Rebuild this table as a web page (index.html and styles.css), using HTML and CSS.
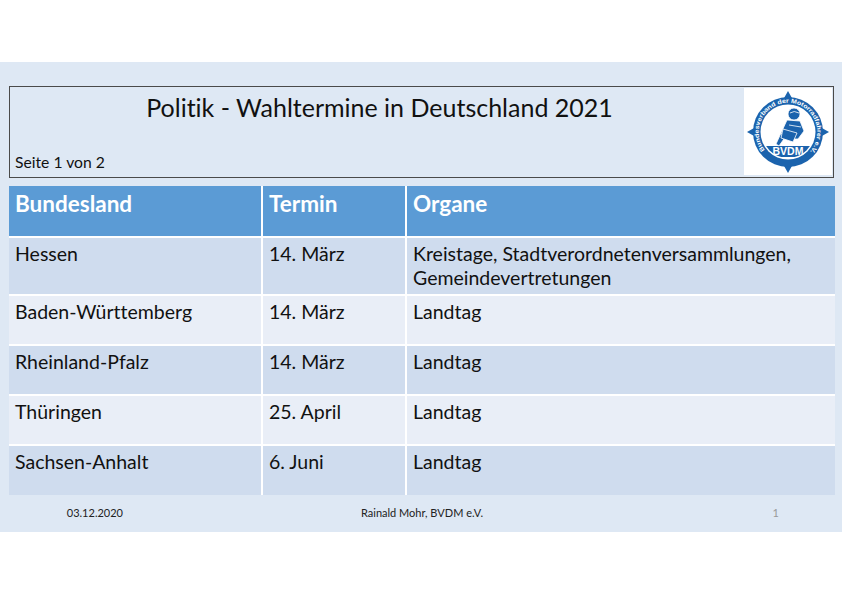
FILE: index.html
```html
<!DOCTYPE html>
<html lang="de">
<head>
<meta charset="utf-8">
<title>Politik - Wahltermine in Deutschland 2021</title>
<link rel="stylesheet" href="styles.css">
</head>
<body>
<div class="slide">
  <header class="head">
    <div class="head-text">
      <h1 class="title">Politik - Wahltermine in Deutschland 2021</h1>
      <div class="page">Seite 1 von 2</div>
    </div>
    <div class="logo">
      <svg width="86" height="86" viewBox="0 0 86 86">
        <defs>
          <path id="ring" d="M 20.5 61.9 A 29.3 29.3 0 1 1 65.5 61.9" />
          <clipPath id="disc"><circle cx="43" cy="43" r="26"/></clipPath>
        </defs>
        <polygon points="43,2 47.5,10 38.5,10" fill="#1b63ad"/>
        <polygon points="43,84 47.5,76 38.5,76" fill="#1b63ad"/>
        <polygon points="2,43 10,38.5 10,47.5" fill="#1b63ad"/>
        <polygon points="84,43 76,38.5 76,47.5" fill="#1b63ad"/>
        <circle cx="43" cy="43" r="35" fill="#1b63ad"/>
        <circle cx="43" cy="43" r="27.5" fill="#ffffff"/>
        <text class="ring-text"><textPath href="#ring" startOffset="1" textLength="132" lengthAdjust="spacingAndGlyphs">Bundesverband der Motorradfahrer e.V.</textPath></text>
        <g clip-path="url(#disc)">
          <rect x="10" y="57" width="66" height="11" fill="#1b63ad"/>
        </g>
        <g fill="#1b63ad" stroke="#ffffff" stroke-width="0.8" stroke-linejoin="round">
          <path d="M 36 44 L 31 55 L 34 57 L 41 47 Z"/>
          <path d="M 42 31 L 55 32 L 59 42 L 53 50 L 41 50 L 36 44 Z"/>
          <circle cx="49" cy="25" r="6"/>
          <path d="M 45 24 Q 49 21 54 24" fill="none"/>
          <path d="M 38 40 L 52 44 L 48 53 L 36 49 Z"/>
          <path d="M 44 36 L 56 38" fill="none"/>
        </g>
        <text x="43" y="66.3" class="bvdm">BVDM</text>
      </svg>
    </div>
  </header>

  <table class="grid">
    <thead>
      <tr class="hrow">
        <th class="c1">Bundesland</th>
        <th class="c2">Termin</th>
        <th class="c3">Organe</th>
      </tr>
    </thead>
    <tbody>
      <tr class="dark tall"><td>Hessen</td><td>14. März</td><td>Kreistage, Stadtverordnetenversammlungen,<br>Gemeindevertretungen</td></tr>
      <tr class="light"><td>Baden-Württemberg</td><td>14. März</td><td>Landtag</td></tr>
      <tr class="dark"><td>Rheinland-Pfalz</td><td>14. März</td><td>Landtag</td></tr>
      <tr class="light"><td>Thüringen</td><td>25. April</td><td>Landtag</td></tr>
      <tr class="dark"><td>Sachsen-Anhalt</td><td>6. Juni</td><td>Landtag</td></tr>
    </tbody>
  </table>

  <footer class="foot">
    <span class="f-date">03.12.2020</span>
    <span class="f-author">Rainald Mohr, BVDM e.V.</span>
    <span class="f-num">1</span>
  </footer>
</div>
</body>
</html>
```
FILE: styles.css
```css
* { box-sizing: border-box; }
html, body { margin: 0; padding: 0; background: #ffffff; }
body {
  width: 842px;
  height: 595px;
  font-family: "Lato", "Open Sans", sans-serif;
  font-variant-ligatures: none;
  color: #111111;
}
.slide {
  margin-top: 62px;
  height: 470px;
  background: #dee8f4;
  padding: 24px 8px 0 9px;
}
.head {
  height: 92px;
  border: 1px solid #4a4a4a;
  display: flex;
  align-items: stretch;
}
.head-text {
  flex: 1;
  display: flex;
  flex-direction: column;
  justify-content: space-between;
  padding: 4px 0 5px 5px;
}
.title {
  margin: 0;
  font-weight: normal;
  font-size: 25px;
  line-height: 32px;
  text-align: center;
}
.page {
  font-size: 15.7px;
  line-height: 19px;
}
.logo {
  width: 88px;
  margin: 1px 1px 2px 0;
  background: #ffffff;
  display: flex;
  align-items: center;
  justify-content: center;
}
.ring-text {
  font-family: "Liberation Sans", sans-serif;
  font-size: 6px;
  font-weight: bold;
  fill: #ffffff;
}
.bvdm {
  font-family: "Liberation Sans", sans-serif;
  font-size: 10.5px;
  font-weight: bold;
  fill: #ffffff;
  text-anchor: middle;
}
.grid {
  margin-top: 8px;
  width: 826px;
  border-collapse: collapse;
  table-layout: fixed;
}
.grid th, .grid td {
  border: 2px solid #ffffff;
  padding: 4px 6px 0 6px;
  vertical-align: top;
  text-align: left;
  font-size: 19.5px;
  line-height: 24px;
}
.grid tr:first-child th { border-top: none; }
.grid tr > :first-child { border-left: none; }
.grid tr > :last-child { border-right: none; }
.grid tbody tr:last-child td { border-bottom: none; }
.c1 { width: 253px; }
.c2 { width: 144px; }
.c3 { width: 429px; }
.hrow { background: #5b9bd5; height: 51px; }
.hrow th {
  color: #ffffff;
  font-weight: bold;
  font-size: 22.5px;
  line-height: 28px;
  padding-top: 4px;
}
.grid tbody tr { height: 50px; }
.grid tbody tr.tall { height: 58px; }
.dark { background: #cfdcee; }
.light { background: #e9eef7; }
.foot {
  display: flex;
  align-items: center;
  height: 34px;
  font-size: 11px;
  color: #222222;
}
.f-date { width: 114px; text-align: right; }
.f-author { width: 360px; text-align: right; }
.f-num { width: 296px; text-align: right; color: #999999; }
```
